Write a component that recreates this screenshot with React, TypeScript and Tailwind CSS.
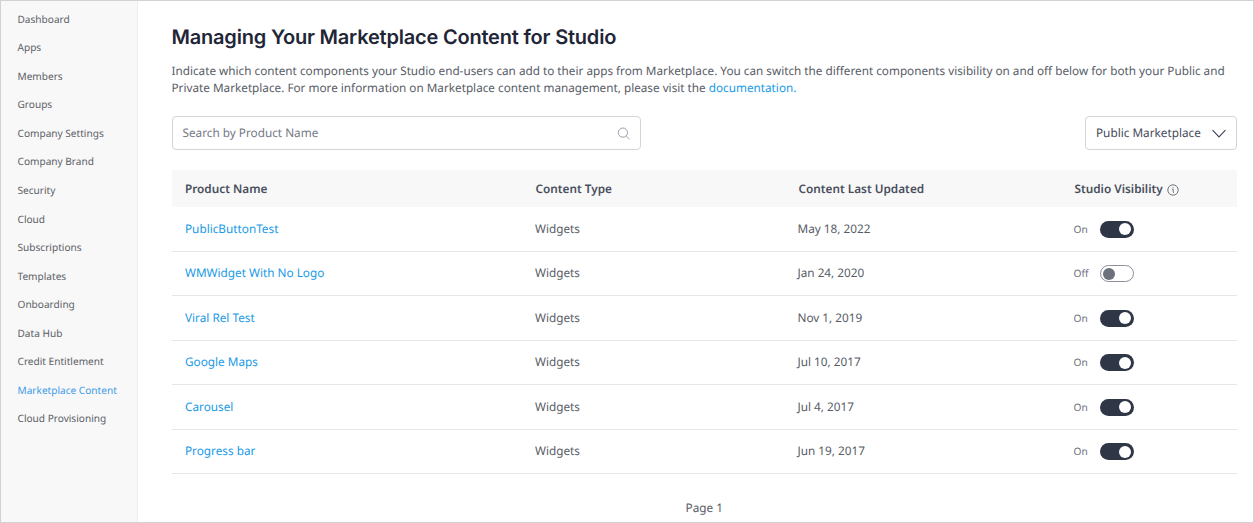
import React from "react";

const navItems = [
  "Dashboard",
  "Apps",
  "Members",
  "Groups",
  "Company Settings",
  "Company Brand",
  "Security",
  "Cloud",
  "Subscriptions",
  "Templates",
  "Onboarding",
  "Data Hub",
  "Credit Entitlement",
  "Marketplace Content",
  "Cloud Provisioning",
];

const products = [
  { name: "PublicButtonTest", type: "Widgets", updated: "May 18, 2022", visible: true },
  { name: "WMWidget With No Logo", type: "Widgets", updated: "Jan 24, 2020", visible: false },
  { name: "Viral Rel Test", type: "Widgets", updated: "Nov 1, 2019", visible: true },
  { name: "Google Maps", type: "Widgets", updated: "Jul 10, 2017", visible: true },
  { name: "Carousel", type: "Widgets", updated: "Jul 4, 2017", visible: true },
  { name: "Progress bar", type: "Widgets", updated: "Jun 19, 2017", visible: true },
];

function Toggle({ on }: { on: boolean }) {
  return on ? (
    <span className="flex h-[17px] w-[34px] items-center justify-end rounded-full bg-[#2f3646] pr-[3px]">
      <span className="size-[12px] rounded-full bg-white" />
    </span>
  ) : (
    <span className="flex h-[17px] w-[34px] items-center rounded-full border border-[#8b8f99] bg-white pl-[1.5px]">
      <span className="size-[12px] rounded-full bg-[#6c717e]" />
    </span>
  );
}

export default function App() {
  return (
    <div className="flex h-[523px] w-[1254px] overflow-hidden border border-[#d2d2d2] bg-white font-['Noto_Sans',sans-serif] text-[11.77px] text-[#575c66] [text-rendering:geometricPrecision]">
      <nav className="w-[137px] shrink-0 border-r border-[#efefef] bg-[#f8f8f8] pt-[3.900px] pl-[16.5px] text-[10.1px] text-[#5b6066]">
        {navItems.map((item) => (
          <a
            key={item}
            className={
              item === "Marketplace Content"
                ? "flex h-[28.57px] items-center whitespace-nowrap text-[#3e9be6]"
                : "flex h-[28.57px] items-center whitespace-nowrap"
            }
          >
            {item}
          </a>
        ))}
      </nav>

      <main className="flex min-w-0 grow flex-col pr-4 pl-[33.500px]">
        <h1 className="mt-[22px] h-[28px] font-['Inter',sans-serif] text-[20px] leading-[28px] font-semibold tracking-[-0.2px] whitespace-nowrap text-[#1f2637]">
          Managing Your Marketplace Content for Studio
        </h1>
        <p className="mt-[12px] text-[11.74px] leading-[16.7px] whitespace-nowrap">
          Indicate which content components your Studio end-users can add to their apps from Marketplace. You can switch the different components visibility on and off below for both your Public and
          <br />
          Private Marketplace. For more information on Marketplace content management, please visit the{" "}
          <a className="text-[#189ae6]">documentation.</a>
        </p>

        <div className="mt-[20px] flex h-[34px] shrink-0 justify-between">
          <div className="flex w-[469.500px] items-center justify-between rounded-[4px] border border-[#d3d5d9] pr-[10px] pl-[10px] text-[#747985]">
            <span className="pt-px">Search by Product Name</span>
            <svg className="size-[13px]" viewBox="0 0 13 13" fill="none" stroke="#9a9eaa" strokeWidth="1">
              <circle cx="5.9" cy="5.6" r="4.6" />
              <path d="M9.300 9l3.200 3.200" />
            </svg>
          </div>
          <div className="flex w-[152px] items-center justify-between rounded-[4px] border border-[#d3d5d9] pr-[10px] pl-[10px] text-[#454b59]">
            <span className="pt-px">Public Marketplace</span>
            <svg className="h-[9px] w-[14px]" viewBox="0 0 14 9" fill="none" stroke="#3f4554" strokeWidth="1.1" strokeLinecap="round">
              <path d="M.8 1.400L7 7.9l6.200-6.500" />
            </svg>
          </div>
        </div>

        <div className="mt-[20px]">
          <div className="grid h-[37px] grid-cols-[350.500px_263px_276px_1fr] items-center bg-[#f8f8f8] pt-px pl-[13.500px] font-semibold text-[#494f5c]">
            <span>Product Name</span>
            <span>Content Type</span>
            <span>Content Last Updated</span>
            <span className="flex items-center gap-[4px]">
              Studio Visibility
              <svg className="mt-px size-[12px]" viewBox="0 0 12 12" fill="none" stroke="#60656f" strokeWidth=".9">
                <circle cx="6" cy="6" r="5.2" />
                <path d="M5.200 5.200h1v3M6.200 8.500H7M6 3.200v1" />
              </svg>
            </span>
          </div>
          {products.map((p) => (
            <div
              key={p.name}
              className="grid h-[44.5px] grid-cols-[350px_262.500px_276px_1fr] items-center border-b border-[#e6e6e7] pl-[13.500px]"
            >
              <a className="pt-px text-[#189ae6]">{p.name}</a>
              <span className="pt-px">{p.type}</span>
              <span className="pt-px">{p.updated}</span>
              <span className="flex items-center">
                <span className="w-[26.500px] text-[10.2px] text-[#6c717e]">{p.visible ? "On" : "Off"}</span>
                <Toggle on={p.visible} />
              </span>
            </div>
          ))}
        </div>
        <div className="mt-[26px] text-center">Page 1</div>
      </main>
    </div>
  );
}
